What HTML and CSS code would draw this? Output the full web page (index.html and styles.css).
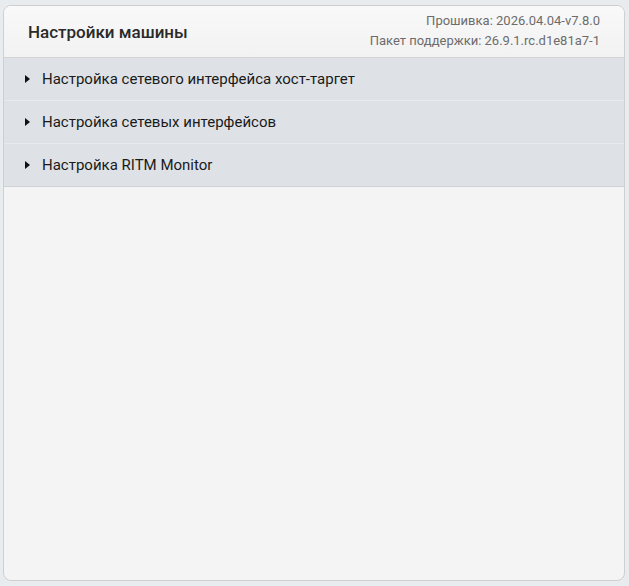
FILE: index.html
```html
<!DOCTYPE html>
<html lang="ru">
<head>
<meta charset="utf-8">
<title>Настройки машины</title>
<link rel="stylesheet" href="styles.css">
</head>
<body>
<div class="card">
  <div class="card-header">
    <h1 class="title">Настройки машины</h1>
    <div class="meta">
      <div>Прошивка: 2026.04.04-v7.8.0</div>
      <div>Пакет поддержки: 26.9.1.rc.d1e81a7-1</div>
    </div>
  </div>
  <div class="list">
    <div class="row"><span class="caret"></span><span class="label">Настройка сетевого интерфейса хост-таргет</span></div>
    <div class="row"><span class="caret"></span><span class="label">Настройка сетевых интерфейсов</span></div>
    <div class="row last"><span class="caret"></span><span class="label">Настройка RITM Monitor</span></div>
  </div>
</div>
</body>
</html>
```
FILE: styles.css
```css
html, body {
  margin: 0;
  padding: 0;
}
body {
  background: #e9ecef;
  font-family: Roboto, "Noto Sans", sans-serif;
  color: #212529;
}
.card {
  box-sizing: border-box;
  margin: 5px 4px 0 3px;
  height: 576px;
  background: #f4f4f4;
  border: 1px solid #cfcfcf;
  border-radius: 8px;
  overflow: hidden;
}
.card-header {
  box-sizing: border-box;
  height: 52px;
  display: flex;
  align-items: center;
  justify-content: space-between;
  padding: 0 24px 0 24px;
  background: linear-gradient(#f9f9f9, #f2f2f2);
  border-bottom: 1px solid #d4d4d4;
}
.title {
  margin: 0;
  font-size: 17px;
  font-weight: 500;
  color: #2a2a2a;
}
.meta {
  text-align: right;
  font-size: 13px;
  line-height: 20px;
  color: #6c6c6c;
  padding-bottom: 2px;
}
.row {
  box-sizing: border-box;
  height: 43px;
  display: flex;
  align-items: center;
  padding-left: 21px;
  background: #dee2e6;
  border-bottom: 1px solid #e8eaec;
  font-size: 15px;
  color: #1a1a1a;
}
.row.last {
  border-bottom-color: #cfd3d7;
}
.caret {
  width: 0;
  height: 0;
  border-top: 4px solid transparent;
  border-bottom: 4px solid transparent;
  border-left: 5px solid #111;
  margin-right: 12px;
}
```
